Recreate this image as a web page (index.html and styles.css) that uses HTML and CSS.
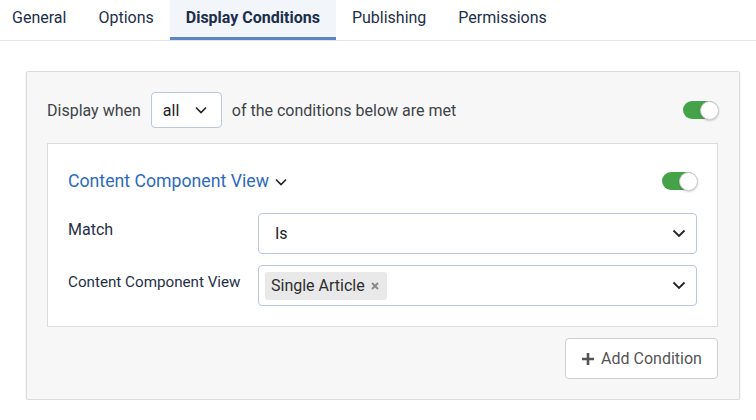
FILE: index.html
```html
<!DOCTYPE html>
<html lang="en">
<head>
<meta charset="utf-8">
<title>Display Conditions</title>
<link rel="stylesheet" href="styles.css">
</head>
<body>
<nav class="tabs">
  <div class="tab">General</div>
  <div class="tab">Options</div>
  <div class="tab active">Display Conditions</div>
  <div class="tab">Publishing</div>
  <div class="tab">Permissions</div>
</nav>

<section class="panel">
  <div class="when-row">
    <span class="muted">Display when</span>
    <div class="mini-select">
      <span>all</span>
      <svg class="chev" width="12" height="8" viewBox="0 0 12 8"><path d="M1 1.5l5 5 5-5" fill="none" stroke="#222" stroke-width="1.6"/></svg>
    </div>
    <span class="muted">of the conditions below are met</span>
    <span class="toggle"><span class="knob"></span></span>
  </div>

  <div class="card">
    <div class="card-head">
      <span class="card-title">Content Component View
        <svg class="title-chev" width="12" height="8" viewBox="0 0 12 8"><path d="M1 1.5l5 5 5-5" fill="none" stroke="#222" stroke-width="1.6"/></svg>
      </span>
      <span class="toggle"><span class="knob"></span></span>
    </div>
    <div class="field">
      <label class="label">Match</label>
      <div class="select">
        <span class="value">Is</span>
        <svg class="chev" width="14" height="9" viewBox="0 0 14 9"><path d="M1.5 1.5l5.5 5.5 5.5-5.5" fill="none" stroke="#222" stroke-width="1.8"/></svg>
      </div>
    </div>
    <div class="field">
      <label class="label long">Content Component View</label>
      <div class="select multi">
        <span class="chip">Single Article
          <svg class="x" width="8" height="8" viewBox="0 0 8 8" aria-label="remove"><path d="M1 1l6 6M7 1L1 7" stroke="#8a8a8a" stroke-width="2" fill="none"/></svg>
        </span>
        <svg class="chev" width="14" height="9" viewBox="0 0 14 9"><path d="M1.5 1.5l5.5 5.5 5.5-5.5" fill="none" stroke="#222" stroke-width="1.8"/></svg>
      </div>
    </div>
  </div>

  <div class="actions">
    <button class="btn">
      <svg width="14" height="14" viewBox="0 0 14 14"><path d="M7 1v12M1 7h12" stroke="#555" stroke-width="2.6" fill="none"/></svg>
      Add Condition
    </button>
  </div>
</section>
</body>
</html>
```

FILE: styles.css
```css
* { box-sizing: border-box; }

body {
  margin: 0;
  font-family: Roboto, "Liberation Sans", sans-serif;
  font-size: 16px;
  color: #1f3047;
  background: #fff;
}

.tabs {
  display: flex;
  border-bottom: 1px solid #dfe5ee;
}

.tab {
  height: 40px;
  padding: 0 16px 2px;
  display: flex;
  align-items: center;
  color: #1d2f4a;
  border-bottom: 3px solid transparent;
}

.tab:first-child { padding-left: 12px; }

.tab.active {
  font-weight: 700;
  background: #f2f5fa;
  border-bottom-color: #5a86c5;
  color: #1b2e4b;
}

.panel {
  margin: 30px 0 0 26px;
  width: 714px;
  background: #f7f7f7;
  border: 1px solid #dcdcdc;
  border-radius: 2px;
  box-shadow: 0 1px 3px rgba(0,0,0,0.08);
  padding: 20px 21px 20px 20px;
}

.when-row {
  display: flex;
  align-items: center;
  height: 36px;
}

.muted { color: #3e4349; }

.mini-select {
  margin: 0 10px 0 10px;
  width: 71px;
  height: 36px;
  background: #fff;
  border: 1px solid #b9c8df;
  border-radius: 4px;
  display: flex;
  align-items: center;
  justify-content: space-between;
  padding: 0 14px 0 11px;
  color: #222;
}

.toggle {
  margin-left: auto;
  position: relative;
  width: 35px;
  height: 18px;
  border-radius: 9px;
  background: #44a249;
  flex: none;
}

.knob {
  position: absolute;
  right: -1px;
  top: -0.5px;
  width: 19px;
  height: 19px;
  border-radius: 50%;
  background: #fff;
  border: 1px solid #c9cdc9;
  box-shadow: 0 1px 2px rgba(0,0,0,0.2);
}

.card {
  margin-top: 15px;
  background: #fff;
  border: 1px solid #dcdcdc;
  padding: 20px;
}

.card-head {
  display: flex;
  align-items: center;
  height: 34px;
}

.card-title {
  color: #2d6bbd;
  font-size: 17.7px;
  display: flex;
  align-items: center;
}

.title-chev { margin-left: 6px; margin-top: 2px; }

.field {
  display: grid;
  grid-template-columns: 190px 1fr;
  margin-top: 11px;
}

.card-head + .field { margin-top: 15px; }

.label {
  padding-top: 7px;
  color: #1f3047;
}

.label.long { font-size: 15.2px; padding-top: 8px; }

.select {
  height: 41px;
  border: 1px solid #b9c8df;
  border-radius: 4px;
  display: flex;
  align-items: center;
  justify-content: space-between;
  padding: 0 10px 0 16px;
  color: #222;
}

.select.multi { padding-left: 6px; }

.chip {
  background: #e9e9e9;
  border-radius: 3px;
  height: 28px;
  display: flex;
  align-items: center;
  gap: 6px;
  padding: 0 8px 0 6px;
  color: #2d2d2d;
}

.actions {
  display: flex;
  justify-content: flex-end;
  margin-top: 11px;
}

.btn {
  height: 41px;
  width: 153px;
  background: #fff;
  border: 1px solid #cfcfcf;
  border-radius: 4px;
  font-family: inherit;
  font-size: 16px;
  color: #555;
  display: flex;
  align-items: center;
  justify-content: center;
  gap: 6px;
  padding: 0;
}
```
